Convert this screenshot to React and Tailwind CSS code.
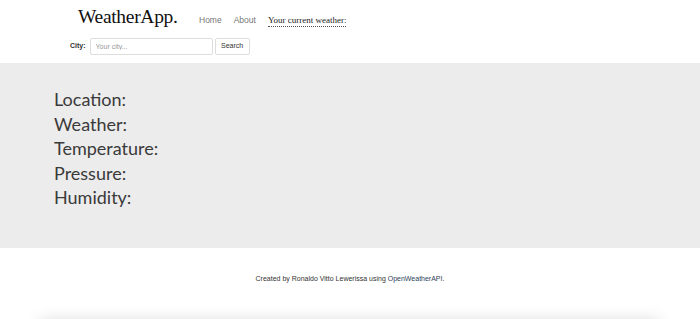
import React, { useState } from 'react';

const LABELS = ['Location:', 'Weather:', 'Temperature:', 'Pressure:', 'Humidity:'];

const App = () => {
    const [city, setCity] = useState('');

    return (
        <div className="w-full h-[319px] bg-white overflow-hidden" style={{ fontFamily: '"Liberation Sans", Arial, sans-serif' }}>
            {/* Header */}
            <div className="h-[63px] pl-[78px] pt-[6px]">
                <div className="flex items-end h-[22px]">
                    <span className="w-[99px] text-[19.5px] leading-[22px] text-[#111] tracking-[-0.3px]" style={{ fontFamily: '"Liberation Serif", "Times New Roman", serif' }}>
                        WeatherApp.
                    </span>
                    <nav className="flex items-center ml-[22px] mb-[1px] text-[8.5px] text-[#777]">
                        <span>Home</span>
                        <span className="ml-[12px]">About</span>
                        <span
                            className="ml-[12px] text-[9px] text-[#222] border-b border-dotted border-[#555] leading-[11px]"
                            style={{ fontFamily: '"Liberation Serif", "Times New Roman", serif' }}
                        >
                            Your current weather:
                        </span>
                    </nav>
                </div>
                <div className="flex items-center mt-[10px] -ml-[8px]">
                    <label className="text-[7px] font-bold text-[#333] mr-[4px]">City:</label>
                    <input
                        value={city}
                        onChange={(e) => setCity(e.target.value)}
                        placeholder="Your city..."
                        className="w-[123px] h-[17px] border border-[#ddd] rounded-[2px] px-[5px] text-[7px] text-[#555] placeholder:text-[#999] outline-none"
                    />
                    <button className="ml-[2px] w-[35px] h-[17px] border border-[#ddd] rounded-[2px] bg-white text-[7px] text-[#333]">
                        Search
                    </button>
                </div>
            </div>

            {/* Weather info */}
            <div className="h-[185px] bg-[#ececec] pl-[54px] pt-[24px]">
                {LABELS.map(l => (
                    <div key={l} className="text-[18px] leading-[24.5px] text-[#3a3a3a]" style={{ fontFamily: 'Lato, "Open Sans", sans-serif' }}>
                        {l}
                    </div>
                ))}
            </div>

            {/* Footer */}
            <div className="h-[72px] flex justify-center pt-[26px] text-[7px] text-[#333]">
                <span>Created by Ronaldo Vitto Lewerissa using <span className="text-[#2c3e5a]">OpenWeatherAPI</span>.</span>
            </div>
            <div className="mx-[40px] h-[20px] shadow-[0_0_16px_rgba(0,0,0,0.14)] bg-white" />
        </div>
    );
};

export default App;
